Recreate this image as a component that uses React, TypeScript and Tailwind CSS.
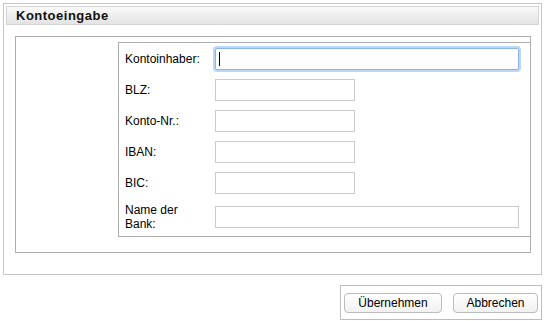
import React from "react";

const fields = [
  { label: "BLZ:", wide: false },
  { label: "Konto-Nr.:", wide: false },
  { label: "IBAN:", wide: false },
  { label: "BIC:", wide: false },
];

const App = () => {
  return (
    <div className="w-[545px] h-[321px] bg-white text-[12px] text-black font-['Liberation_Sans',Arial,sans-serif]">
      <div className="mx-[3px] mt-[3px] h-[272px] border border-[#c6c6c6] p-[2px]">
        <div className="h-[19px] border border-[#d4d4d4] bg-gradient-to-b from-[#fafafa] to-[#e3e3e3] pl-[9px] text-[13px] font-bold tracking-[0.5px] leading-[17px] text-[#111]">
          Kontoeingabe
        </div>

        <div className="mt-[11px] ml-[9px] mr-[8px] h-[217px] border border-[#adadad] flex">
          <div className="w-[102px] shrink-0" />
          <div className="mt-[5px] self-start flex-1 border border-r-0 border-[#adadad] pl-[6px]">
            <div className="h-[31px] flex items-center">
              <label className="w-[90px] shrink-0">Kontoinhaber:</label>
              <div className="relative">
                <input
                  type="text"
                  className="block w-[304px] h-[22px] border border-[#8ab4ea] rounded-[2px] shadow-[0_0_0_2px_#bcd6f6] outline-none px-[3px]"
                />
                <span className="absolute left-[4px] top-[4px] w-px h-[14px] bg-black" />
              </div>
            </div>
            {fields.map((f) => (
              <div key={f.label} className="h-[31px] flex items-center">
                <label className="w-[90px] shrink-0">{f.label}</label>
                <input
                  type="text"
                  className="block w-[140px] h-[22px] border border-[#cbcbcb] outline-none"
                />
              </div>
            ))}
            <div className="h-[38px] flex items-center">
              <label className="w-[90px] shrink-0 leading-[14px]">
                Name der
                <br />
                Bank:
              </label>
              <input
                type="text"
                className="block w-[304px] h-[22px] border border-[#cbcbcb] outline-none"
              />
            </div>
          </div>
        </div>
      </div>

      <div className="mt-[10px] ml-auto mr-[3px] w-[202px] h-[35px] border border-[#bdbdbd] flex items-center gap-[11px] pl-[3px]">
        <button className="w-[98px] h-[20px] rounded-[4px] border border-[#bcbcbc] bg-gradient-to-b from-white to-[#f1f1f1] text-[12px] text-black">
          Übernehmen
        </button>
        <button className="w-[85px] h-[20px] rounded-[4px] border border-[#bcbcbc] bg-gradient-to-b from-white to-[#f1f1f1] text-[12px] text-black">
          Abbrechen
        </button>
      </div>
    </div>
  );
};

export default App;
